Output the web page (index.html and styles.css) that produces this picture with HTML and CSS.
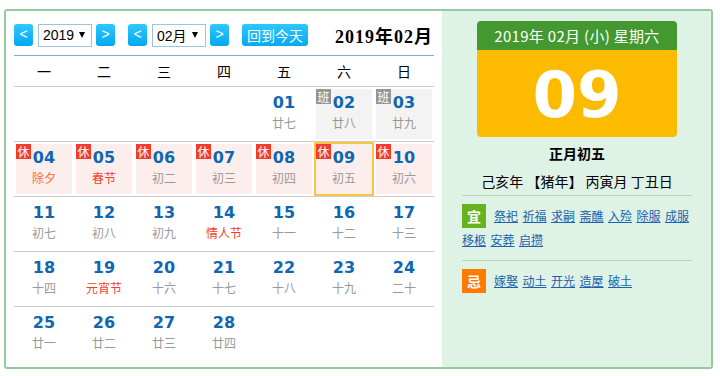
FILE: index.html
```html
<!DOCTYPE html>
<html lang="zh-CN">
<head>
    <meta charset="UTF-8">
    <meta name="viewport" content="width=device-width, initial-scale=1.0">
    <title>万年历</title>
    <link rel="stylesheet" href="styles.css">
</head>
<body>

    <div class="calendar">
        <div class="cal-main">
            <div class="toolbar">
                <span class="btn">&lt;</span>
                <span class="sel">2019<i class="arrow"></i></span>
                <span class="btn">&gt;</span>
                <span class="btn btn-gap">&lt;</span>
                <span class="sel">02月<i class="arrow"></i></span>
                <span class="btn">&gt;</span>
                <span class="btn-today">回到今天</span>
                <span class="title">2019年02月</span>
            </div>

            <div class="weekdays">
                <span>一</span><span>二</span><span>三</span><span>四</span><span>五</span><span>六</span><span>日</span>
            </div>

            <!-- week 1 -->
            <div class="week">
                <div class="cell"></div>
                <div class="cell"></div>
                <div class="cell"></div>
                <div class="cell"></div>
                <div class="cell"><div class="day"><b>01</b><em>廿七</em></div></div>
                <div class="cell"><div class="day work"><span class="mark">班</span><b>02</b><em>廿八</em></div></div>
                <div class="cell"><div class="day work"><span class="mark">班</span><b>03</b><em>廿九</em></div></div>
            </div>

            <!-- week 2: spring festival -->
            <div class="week">
                <div class="cell"><div class="day rest"><span class="mark">休</span><b>04</b><em class="fest fest-eve">除夕</em></div></div>
                <div class="cell"><div class="day rest"><span class="mark">休</span><b>05</b><em class="fest">春节</em></div></div>
                <div class="cell"><div class="day rest"><span class="mark">休</span><b>06</b><em>初二</em></div></div>
                <div class="cell"><div class="day rest"><span class="mark">休</span><b>07</b><em>初三</em></div></div>
                <div class="cell"><div class="day rest"><span class="mark">休</span><b>08</b><em>初四</em></div></div>
                <div class="cell today"><div class="day rest"><span class="mark">休</span><b>09</b><em>初五</em></div></div>
                <div class="cell"><div class="day rest"><span class="mark">休</span><b>10</b><em>初六</em></div></div>
            </div>

            <div class="week">
                <div class="cell"><div class="day"><b>11</b><em>初七</em></div></div>
                <div class="cell"><div class="day"><b>12</b><em>初八</em></div></div>
                <div class="cell"><div class="day"><b>13</b><em>初九</em></div></div>
                <div class="cell"><div class="day"><b>14</b><em class="fest">情人节</em></div></div>
                <div class="cell"><div class="day"><b>15</b><em>十一</em></div></div>
                <div class="cell"><div class="day"><b>16</b><em>十二</em></div></div>
                <div class="cell"><div class="day"><b>17</b><em>十三</em></div></div>
            </div>

            <div class="week">
                <div class="cell"><div class="day"><b>18</b><em>十四</em></div></div>
                <div class="cell"><div class="day"><b>19</b><em class="fest">元宵节</em></div></div>
                <div class="cell"><div class="day"><b>20</b><em>十六</em></div></div>
                <div class="cell"><div class="day"><b>21</b><em>十七</em></div></div>
                <div class="cell"><div class="day"><b>22</b><em>十八</em></div></div>
                <div class="cell"><div class="day"><b>23</b><em>十九</em></div></div>
                <div class="cell"><div class="day"><b>24</b><em>二十</em></div></div>
            </div>

            <div class="week last">
                <div class="cell"><div class="day"><b>25</b><em>廿一</em></div></div>
                <div class="cell"><div class="day"><b>26</b><em>廿二</em></div></div>
                <div class="cell"><div class="day"><b>27</b><em>廿三</em></div></div>
                <div class="cell"><div class="day"><b>28</b><em>廿四</em></div></div>
            </div>
        </div>

        <div class="cal-side">
            <div class="datebox">
                <div class="datebox-head">2019年 02月 (小) 星期六</div>
                <div class="datebox-day">09</div>
            </div>
            <div class="lunar">正月初五</div>
            <div class="ganzhi">己亥年 【猪年】 丙寅月 丁丑日</div>

            <div class="yiji">
                <span class="tag tag-yi">宜</span>
                <a href="#">祭祀</a><a href="#">祈福</a><a href="#">求嗣</a><a href="#">斋醮</a><a href="#">入殓</a><a href="#">除服</a><a href="#">成服</a><a href="#">移柩</a><a href="#">安葬</a><a href="#">启攒</a>
            </div>
            <div class="yiji">
                <span class="tag tag-ji">忌</span>
                <a href="#">嫁娶</a><a href="#">动土</a><a href="#">开光</a><a href="#">造屋</a><a href="#">破土</a>
            </div>
        </div>
    </div>

</body>
</html>
```

FILE: styles.css
```css
body {
    margin: 0;
    font-family: "Noto Sans CJK SC", sans-serif;
    color: #000;
    background: #fff;
}

.calendar {
    display: flex;
    width: 705px;
    height: 356px;
    margin: 9px 0 0 4px;
    border: 2px solid #96c99e;
    border-radius: 3px;
}

.cal-main {
    width: 420px;
    padding: 0 8px;
}

/* top bar with year / month pickers */
.toolbar {
    display: flex;
    align-items: center;
    height: 24px;
    margin-top: 12px;
    padding-bottom: 8px;
    border-bottom: 1px solid #78ace0;
}

.btn {
    width: 19px;
    height: 22px;
    line-height: 21px;
    text-align: center;
    color: #fff;
    font-family: "Liberation Sans", sans-serif;
    font-size: 14px;
    background: linear-gradient(#30c8ff, #02a8f0);
    border-radius: 3px;
}

.btn-gap {
    margin-left: 13px;
}

.sel {
    display: flex;
    align-items: center;
    box-sizing: border-box;
    width: 54px;
    height: 23px;
    margin: 0 4px 0 5px;
    padding-left: 4px;
    border: 1px solid #9dc4df;
    font-family: "Liberation Sans", "Noto Sans CJK SC", sans-serif;
    font-size: 14px;
    background: #fff;
}

.arrow {
    width: 0;
    height: 0;
    margin-left: 5px;
    border-left: 3px solid transparent;
    border-right: 3px solid transparent;
    border-top: 6px solid #000;
}

.btn-today {
    height: 22px;
    line-height: 22px;
    margin-left: 13px;
    padding: 0 5px;
    color: #fff;
    font-size: 14px;
    background: linear-gradient(#2ec6ff, #05aaf0);
    border-radius: 3px;
}

.title {
    margin-left: auto;
    margin-right: 1px;
    font-family: "Liberation Serif", "Noto Sans CJK SC", serif;
    font-weight: bold;
    font-size: 18px;
    letter-spacing: 1px;
}

.weekdays {
    display: grid;
    grid-template-columns: repeat(7, 60px);
    height: 30px;
    line-height: 30px;
    font-size: 14px;
    text-align: center;
    border-bottom: 1px solid #ccc;
}

/* day grid */
.week {
    display: grid;
    grid-template-columns: repeat(7, 60px);
    height: 54px;
    border-bottom: 1px solid #ccc;
}

.week.last {
    border-bottom: none;
}

.cell {
    padding: 2px;
}

.day {
    position: relative;
    height: 50px;
    text-align: center;
}

.day b {
    display: block;
    padding-top: 4px;
    line-height: 20px;
    font-family: "DejaVu Sans", sans-serif;
    font-size: 16px;
    color: #0f67b1;
}

.day em {
    display: block;
    margin-top: 1px;
    line-height: 18px;
    font-style: normal;
    font-size: 12px;
    color: #999;
}

.day em.fest {
    color: #ff3c1f;
}

.day em.fest-eve {
    color: #ff6a2a;
}

.day.rest {
    background: #fdeeee;
}

.day.work {
    background: #f3f3f3;
}

.mark {
    position: absolute;
    top: 0;
    left: 0;
    width: 15px;
    height: 15px;
    line-height: 15px;
    font-size: 12px;
    color: #fff;
    background: #f23b2a;
}

.work .mark {
    background: #959595;
}

.cell.today {
    padding: 0;
}

.cell.today .day {
    height: 50px;
    border: 2px solid #fac640;
}

/* right info panel */
.cal-side {
    flex: 1;
    padding: 10px 19px 0 20px;
    background: #dff2e6;
}

.datebox {
    width: 200px;
    margin: 0 auto;
}

.datebox-head {
    height: 29px;
    line-height: 29px;
    text-align: center;
    color: #fff;
    font-size: 15px;
    letter-spacing: 0.3px;
    background: #43992f;
    border-radius: 4px 4px 0 0;
}

.datebox-day {
    height: 84px;
    padding-top: 3px;
    line-height: 84px;
    text-align: center;
    color: #fff;
    font-family: "DejaVu Sans", sans-serif;
    font-weight: bold;
    font-size: 64px;
    background: #fdbb00;
    border-radius: 0 0 4px 4px;
}

.lunar {
    margin-top: 6px;
    line-height: 20px;
    text-align: center;
    font-size: 14px;
    font-weight: bold;
}

.ganzhi {
    margin-top: 8px;
    line-height: 20px;
    text-align: center;
    font-size: 14px;
}

.yiji {
    display: flex;
    flex-wrap: wrap;
    column-gap: 4.5px;
    padding: 8px 0;
    border-top: 1px solid #b1d9bb;
}

.ganzhi + .yiji {
    margin-top: 4px;
}

.tag {
    width: 24px;
    height: 24px;
    line-height: 24px;
    margin-right: 3.5px;
    text-align: center;
    color: #fff;
    font-size: 14px;
    font-weight: bold;
}

.tag-yi {
    background: #67b31f;
}

.tag-ji {
    background: #ff7a00;
}

.yiji a {
    line-height: 24px;
    font-size: 12px;
    color: #1b63ae;
    text-decoration: underline;
}
```
